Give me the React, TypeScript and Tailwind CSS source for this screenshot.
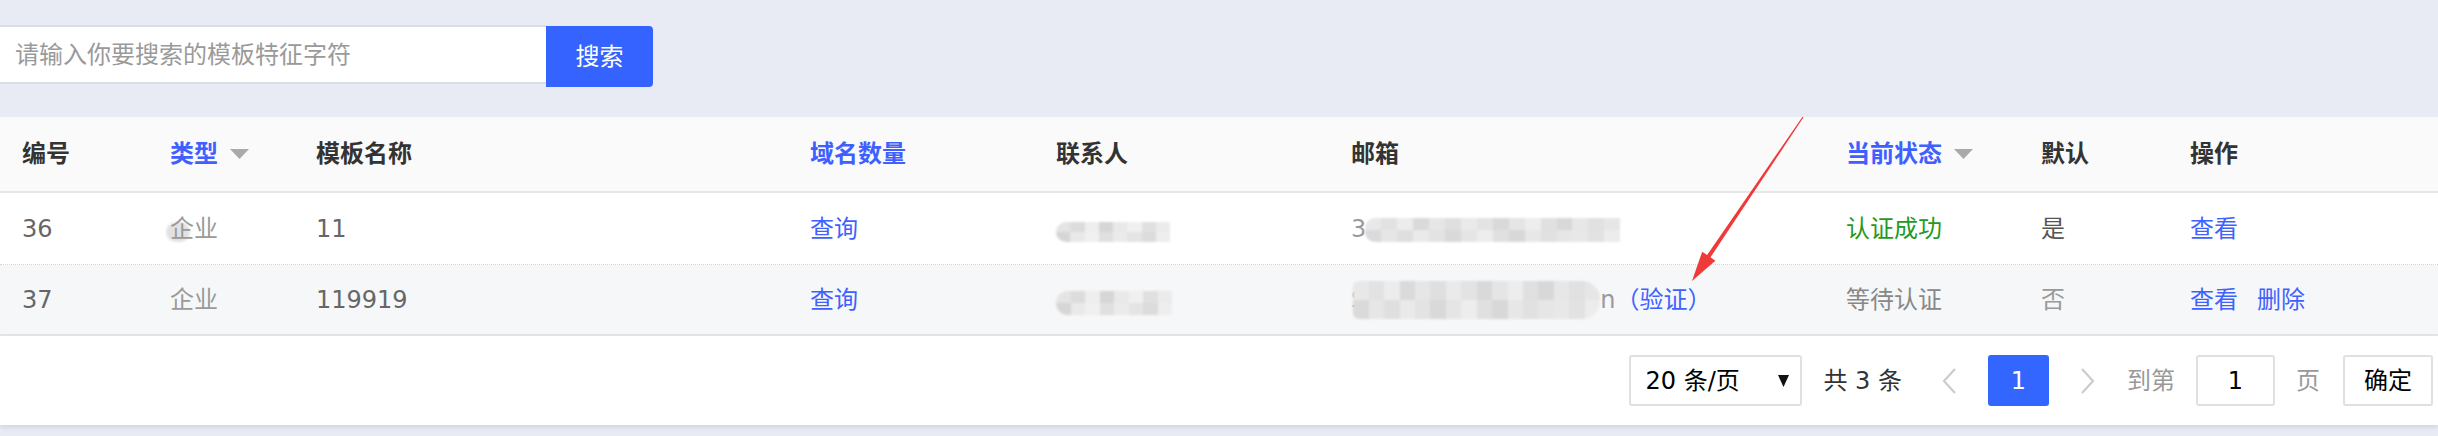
import React from "react";

const COLS = "grid grid-cols-[148px_146px_494px_246px_295px_495px_195px_149px_1fr]";

function Mosaic({ w, h, colors, className = "" }: { w: number; h: number; colors: string[]; className?: string }) {
  return (
    <div className={"flex overflow-hidden blur-[1px] " + className} style={{ width: w, height: h }}>
      {colors.map((c, i) => (
        <div key={i} className="flex-1 h-full flex flex-col">
          <div className="flex-1" style={{ background: c }} />
          <div className="flex-1" style={{ background: colors[(i + 3) % colors.length] }} />
        </div>
      ))}
    </div>
  );
}

function SortArrow() {
  return (
    <svg width="19" height="10" viewBox="0 0 19 10" className="ml-[12px]">
      <polygon points="0,0 19,0 9.5,10" fill="#aaaaaa" />
    </svg>
  );
}

const grayA = ["#e4e4e4", "#dcdcdc", "#eeeeee", "#d6d6d6", "#e9e9e9", "#f0f0f0", "#e0e0e0", "#ebebeb"];
const grayB = ["#e8e8e8", "#e2e2e2", "#ececec", "#dadada", "#e6e6e6", "#dfdfdf", "#eaeaea", "#e3e3e3", "#d9d9d9", "#e5e5e5", "#ededed", "#e0e0e0", "#d8d8d8", "#e7e7e7", "#e1e1e1", "#e6e6e6"];

export default function App() {
  return (
    <div className="relative w-[2438px] h-[436px] overflow-hidden bg-[#e8ebf3] font-['DejaVu_Sans','Noto_Sans_CJK_SC',sans-serif] text-[24px] leading-none">
      {/* search */}
      <div className="flex items-start pt-[25px]">
        <div className="w-[546px] h-[59px] bg-white border-y-2 border-[#dadde4] flex items-center pl-[15px] text-[#9a9a9a]">
          请输入你要搜索的模板特征字符
        </div>
        <div className="w-[107px] h-[61px] mt-[1px] bg-[#3563ff] rounded-r-[4px] flex items-center justify-center text-white">
          搜索
        </div>
      </div>

      {/* table */}
      <div className="mt-[30px] bg-white">
        {/* header */}
        <div className={COLS + " h-[76px] bg-[#fafafa] border-b-2 border-[#e6e6e6] font-bold text-[#333]"}>
          <div className="pl-[22px] flex items-center">编号</div>
          <div className="pl-[22px] flex items-center text-[#3f5fff]">类型<SortArrow /></div>
          <div className="pl-[22px] flex items-center">模板名称</div>
          <div className="pl-[22px] flex items-center text-[#3f5fff]">域名数量</div>
          <div className="pl-[22px] flex items-center">联系人</div>
          <div className="pl-[22px] flex items-center">邮箱</div>
          <div className="pl-[22px] flex items-center text-[#3f5fff]">当前状态<SortArrow /></div>
          <div className="pl-[22px] flex items-center">默认</div>
          <div className="pl-[22px] flex items-center">操作</div>
        </div>

        {/* row 1 */}
        <div className={COLS + " h-[72px] bg-white border-b border-dotted border-[#d6d6d6] text-[#666]"}>
          <div className="pl-[22px] flex items-center">36</div>
          <div className="pl-[22px] flex items-center relative text-[#9a9a9a]">
            <div className="absolute left-[18px] top-[29px] w-[24px] h-[20px] rounded-full bg-[#e2e2e2] blur-[1px]" />
            <span className="relative">企业</span>
          </div>
          <div className="pl-[22px] flex items-center">11</div>
          <div className="pl-[22px] flex items-center text-[#3f62ff]">查询</div>
          <div className="pl-[22px] flex items-center">
            <Mosaic w={114} h={20} colors={grayA} className="mt-[6px] rounded-l-full" />
          </div>
          <div className="pl-[22px] flex items-center text-[#9a9a9a]">
            <span>3</span>
            <Mosaic w={255} h={24} colors={grayB} className="ml-[-1px] mt-[2px] rounded-l-[10px]" />
          </div>
          <div className="pl-[22px] flex items-center text-[#1f9a22]">认证成功</div>
          <div className="pl-[22px] flex items-center text-[#555]">是</div>
          <div className="pl-[22px] flex items-center text-[#3f62ff]">查看</div>
        </div>

        {/* row 2 */}
        <div className={COLS + " h-[71px] bg-[#f6f7f9] border-b-2 border-[#e6e6e6] text-[#666]"}>
          <div className="pl-[22px] flex items-center">37</div>
          <div className="pl-[22px] flex items-center text-[#9a9a9a]">企业</div>
          <div className="pl-[22px] flex items-center">119919</div>
          <div className="pl-[22px] flex items-center text-[#3f62ff]">查询</div>
          <div className="pl-[22px] flex items-center">
            <Mosaic w={116} h={24} colors={grayA} className="mt-[6px] rounded-l-full" />
          </div>
          <div className="pl-[22px] flex items-center text-[#9a9a9a]">
            <span>S</span>
            <Mosaic w={247} h={38} colors={grayB} className="ml-[-13px] rounded-r-[18px] rounded-l-[6px]" />
            <span>n</span>
            <span className="text-[#3f62ff]">（验证）</span>
          </div>
          <div className="pl-[22px] flex items-center text-[#888]">等待认证</div>
          <div className="pl-[22px] flex items-center text-[#9a9a9a]">否</div>
          <div className="pl-[22px] flex items-center text-[#3f62ff]">
            <span>查看</span>
            <span className="ml-[19px]">删除</span>
          </div>
        </div>

        {/* pagination */}
        <div className="h-[89px] flex items-center justify-end pr-[5px] shadow-[0_2px_5px_rgba(0,0,0,0.1)]">
          <div className="w-[173px] h-[51px] border-2 border-[#e0e0e0] rounded-[3px] flex items-center justify-between pl-[14px] pr-[11px] text-black">
            <span>20 条/页</span>
            <svg width="11" height="12" viewBox="0 0 11 12">
              <polygon points="0,0 11,0 5.5,12" fill="#111" />
            </svg>
          </div>
          <span className="ml-[21px] text-[#333]">共 3 条</span>
          <svg width="15" height="26" viewBox="0 0 15 26" className="ml-[40px]">
            <polyline points="13,1 2,13 13,25" fill="none" stroke="#cccccc" strokeWidth="2.2" />
          </svg>
          <div className="ml-[31px] w-[61px] h-[51px] rounded-[3px] bg-[#3366ff] text-white flex items-center justify-center">1</div>
          <svg width="15" height="26" viewBox="0 0 15 26" className="ml-[31px]">
            <polyline points="2,1 13,13 2,25" fill="none" stroke="#cccccc" strokeWidth="2.2" />
          </svg>
          <span className="ml-[32px] text-[#999]">到第</span>
          <div className="ml-[21px] w-[79px] h-[51px] border-2 border-[#e0e0e0] rounded-[3px] flex items-center justify-center text-black">1</div>
          <span className="ml-[21px] text-[#999]">页</span>
          <div className="ml-[23px] w-[90px] h-[51px] border-2 border-[#e0e0e0] rounded-[3px] flex items-center justify-center text-black">确定</div>
        </div>
      </div>

      {/* annotation arrow */}
      <svg className="absolute left-0 top-0 pointer-events-none" width="2438" height="436" viewBox="0 0 2438 436">
        <polygon
          points="1803.5,117.3 1710.5,257.3 1715.4,260.7 1692,281 1702.2,251.7 1707.1,255.1 1802.5,116.7"
          fill="#ef3a3a"
        />
      </svg>
    </div>
  );
}
